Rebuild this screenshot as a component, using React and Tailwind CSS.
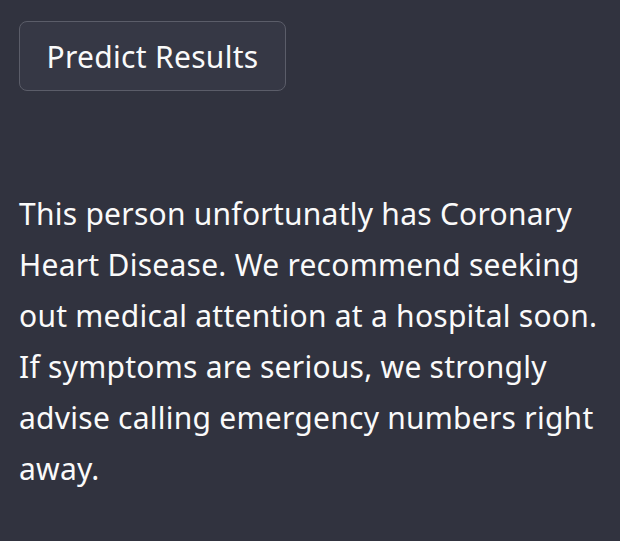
export default function App() {
  return (
    <div
      className="min-h-[541px] bg-[#31333f] px-[19px] pt-[21px] text-[#fafafa]"
      style={{ fontFamily: '"Noto Sans", "Open Sans", sans-serif' }}
    >
      <button
        type="button"
        className="flex h-[70px] w-[267px] items-center justify-center rounded-lg border border-[#5b5d69] bg-[#363845] text-[30px] tracking-[0.3px] text-[#fafafa]"
      >
        Predict Results
      </button>

      <p className="mt-[97px] text-[30px] leading-[51px] tracking-[0.25px]">
        This person unfortunatly has Coronary
        <br />
        Heart Disease. We recommend seeking
        <br />
        out medical attention at a hospital soon.
        <br />
        If symptoms are serious, we strongly
        <br />
        advise calling emergency numbers right
        <br />
        away.
      </p>
    </div>
  );
}
